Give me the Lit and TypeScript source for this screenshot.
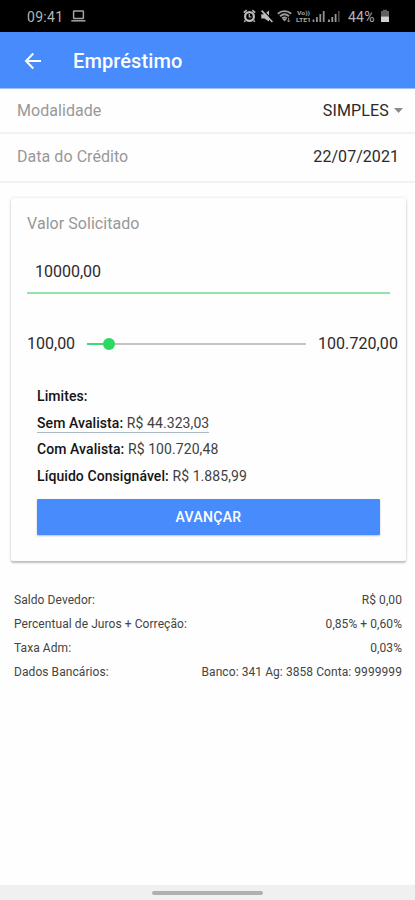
import { LitElement, html, css } from "lit";
import { customElement, property } from "lit/decorators.js";

@customElement("status-bar")
class StatusBar extends LitElement {
  static styles = css`
    :host { display: flex; align-items: center; height: 32px; padding: 0 25px 0 27px; background: #000; color: #b4b4b4; font-size: 14px; letter-spacing: 0.3px; box-sizing: border-box; }
    .time { width: 44px; padding-top: 1px; }
    .fill { flex: 1; }
    .icons { margin-right: 7px; }
    .battery { margin-left: 4px; }
    .pct { padding-top: 1px; width: 28px; white-space: nowrap; letter-spacing: 0.2px; }
    svg { display: block; }
    .tiny { font: 700 6px Roboto, sans-serif; letter-spacing: 0; }
  `;
  render() {
    return html`
      <span class="time">09:41</span>
      <svg width="15" height="14" viewBox="0 0 15 14" fill="none" stroke="#a4a4a4" stroke-width="1.5">
        <rect x="2.6" y="2" width="9.8" height="7.6" rx="0.6" /><path d="M0.3 11.8H14.5" />
      </svg>
      <span class="fill"></span>
      <svg class="icons" width="98" height="16" viewBox="0 0 98 16" fill="none">
        <g stroke="#bdbdbd">
          <circle cx="6.5" cy="8.5" r="4.4" stroke-width="2.2" />
          <path d="M6.3 6V9H8.5" stroke-width="1.2" />
          <path d="M0.8 4.6L3.7 2.2M12.2 4.6L9.3 2.2M2.5 12.5L1.2 13.8M10.5 12.5L11.8 13.8" stroke-width="1.6" />
        </g>
        <path d="M18.3 6.2H21.3L26 2.4V13.6L21.3 10.4H18.3Z" fill="#bdbdbd" />
        <path d="M19.8 2L30.6 13.2" stroke="#000" stroke-width="1.2" />
        <path d="M18.6 2.6L29.4 14" stroke="#bdbdbd" stroke-width="1.6" />
        <g stroke="#9d9d9d" stroke-width="1.9">
          <path d="M34.8 5.7C38.8 2.2 44.2 2.2 48.2 5.7" />
          <path d="M37 8.2C39.8 5.8 43.2 5.8 46 8.2" />
          <path d="M39.2 10.5C40.6 9.3 42.4 9.3 43.8 10.5" />
        </g>
        <path d="M39.4 10.9H43.6L41.5 13.6Z" fill="#9d9d9d" />
        <path d="M45.6 9.8V14M44.1 12.4L45.6 14L47.1 12.4" stroke="#8a8a8a" stroke-width="1" />
        <text class="tiny" x="54" y="6.6" textLength="13" lengthAdjust="spacingAndGlyphs" fill="#a6a6a6">Vo))</text>
        <text class="tiny" x="53" y="13.9" textLength="15" lengthAdjust="spacingAndGlyphs" fill="#a6a6a6">LTE1</text>
        <path d="M70.5 14V11.5M73.9 14V9M77.3 14V6M80.7 14V3" stroke="#8f8f8f" stroke-width="1.8" />
        <path d="M86 14V11.5M89.3 14V9M92.6 14V6" stroke="#9a9a9a" stroke-width="1.8" />
        <path d="M95.8 14V3" stroke="#484848" stroke-width="1.6" />
      </svg>
      <span class="pct">44%</span>
      <svg class="battery" width="10" height="14" viewBox="0 0 10 14">
        <path d="M3 0.8H7V2H9V7.4H1V2H3Z" fill="#5f5f5f" /><path d="M1 7.4H9V13H1Z" fill="#d2d2d2" />
      </svg>
    `;
  }
}

@customElement("loan-row")
class LoanRow extends LitElement {
  @property() label = "";
  @property() value = "";
  static styles = css`
    :host { display: flex; justify-content: space-between; white-space: nowrap; }
  `;
  render() {
    return html`<span>${this.label}</span><span>${this.value}</span>`;
  }
}

@customElement("app-root")
class AppRoot extends LitElement {
  limits = [
    { label: "Sem Avalista:", value: "R$ 44.323,03", marked: true },
    { label: "Com Avalista:", value: "R$ 100.720,48", marked: false },
    { label: "Líquido Consignável:", value: "R$ 1.885,99", marked: false },
  ];
  details = [
    ["Saldo Devedor:", "R$ 0,00"],
    ["Percentual de Juros + Correção:", "0,85% + 0,60%"],
    ["Taxa Adm:", "0,03%"],
    ["Dados Bancários:", "Banco: 341 Ag: 3858 Conta: 9999999"],
  ];
  min = 100;
  max = 100720;
  amount = 10000;

  static styles = css`
    :host { display: flex; flex-direction: column; height: 900px; background: #fefefe; font-family: Roboto, sans-serif; font-size: 16px; color: #2a2a2a; box-sizing: border-box; }
    * { box-sizing: border-box; }
    .bar { display: flex; align-items: center; gap: 31px; height: 57px; padding: 1px 24px 0 24px; background: #488bfc; border-bottom: 1px solid #9fc1fb; color: #fff; }
    .bar svg { display: block; }
    .title { font-size: 20px; font-weight: 500; line-height: 24px; padding-top: 1px; letter-spacing: 0.1px; }
    .field { display: flex; align-items: center; justify-content: space-between; padding: 0 16px 2px 17px; border-bottom: 2px solid #f2f2f2; height: 49px; letter-spacing: 0.05px; }
    .field.first { height: 45px; padding-right: 12px; padding-bottom: 1px; }
    .label { color: #989898; }
    .select { display: flex; align-items: center; gap: 5px; letter-spacing: 0.15px; }
    .card { margin: 15px 9px 0 11px; height: 363px; padding: 16px 8px 0 16px; border-radius: 2px; background: #fefefe; box-shadow: 0 2px 2px rgba(0,0,0,.22), 0 0 3px rgba(0,0,0,.12); }
    .card .label { display: block; line-height: 20px; letter-spacing: 0.05px; }
    .input { height: 45px; margin: 15px 8px 0 0; padding: 13px 0 0 8px; line-height: 20px; border-bottom: 2px solid #92e2a9; }
    .range { display: flex; align-items: center; justify-content: space-between; margin-top: 39px; height: 20px; white-space: nowrap; }
    .range .max { letter-spacing: 0.08px; }
    .track { display: flex; align-items: center; width: 219px; height: 20px; padding-top: 2px; }
    .done { height: 2px; margin-right: -6px; padding-left: 6px; background: #42d873; }
    .rest { flex: 1; height: 2px; background: #c4c4c4; }
    .knob { width: 12px; height: 12px; margin-right: -1px; border-radius: 50%; background: #2bd765; z-index: 1; }
    .limits { margin: 30px 18px 0 10px; font-size: 14px; letter-spacing: 0.08px; }
    .line { height: 26.7px; line-height: 26px; white-space: nowrap; }
    .line b { font-weight: 500; color: #141414; }
    .line span { color: #3f3f3f; }
    .line .marked { display: inline-block; line-height: 26px; height: 23px; border-bottom: 1px solid #a9bac5; vertical-align: top; }
    .button { display: flex; align-items: center; justify-content: center; width: 343px; height: 36px; margin: 9px 0 0 10px; background: #488bfc; border-radius: 1px; box-shadow: 0 1px 2px rgba(0,0,0,.25); color: #fff; font-size: 14px; font-weight: 500; letter-spacing: 0.3px; }
    .details { display: flex; flex-direction: column; gap: 4.3px; margin: 28.5px 13px 0 14px; font-size: 12px; line-height: 20px; letter-spacing: 0.07px; color: #444; }
    .space { flex: 1; }
    .nav { display: flex; justify-content: center; height: 15px; padding-top: 6px; background: #f0f0f0; }
    .pill { width: 111px; height: 4px; border-radius: 2px; background: #b0b0b0; }
  `;

  render() {
    const ratio = (this.amount - this.min) / (this.max - this.min);
    return html`
      <status-bar></status-bar>
      <header class="bar">
        <svg width="18" height="18" viewBox="0 0 18 18" fill="none" stroke="#fff" stroke-width="2">
          <path d="M17 9H2.5M9.3 1.5L2 9L9.3 16.5" />
        </svg>
        <span class="title">Empréstimo</span>
      </header>
      <div class="field first">
        <span class="label">Modalidade</span>
        <span class="select">SIMPLES<svg width="9" height="5" viewBox="0 0 9 5"><path d="M0 0H9L4.5 5Z" fill="#8b8b8b" /></svg></span>
      </div>
      <div class="field"><span class="label">Data do Crédito</span><span>22/07/2021</span></div>
      <section class="card">
        <span class="label">Valor Solicitado</span>
        <div class="input">10000,00</div>
        <div class="range">
          <span>100,00</span>
          <div class="track">
            <div class="done" style="width:${ratio * 219}px"></div>
            <div class="knob"></div>
            <div class="rest"></div>
          </div>
          <span class="max">100.720,00</span>
        </div>
        <div class="limits">
          <div class="line"><b>Limites:</b></div>
          ${this.limits.map((l) => html`<div class="line"><span class=${l.marked ? "marked" : ""}><b>${l.label}</b> ${l.value}</span></div>`)}
        </div>
        <div class="button">AVANÇAR</div>
      </section>
      <div class="details">
        ${this.details.map(([l, v]) => html`<loan-row .label=${l} .value=${v}></loan-row>`)}
      </div>
      <div class="space"></div>
      <div class="nav"><div class="pill"></div></div>
    `;
  }
}
